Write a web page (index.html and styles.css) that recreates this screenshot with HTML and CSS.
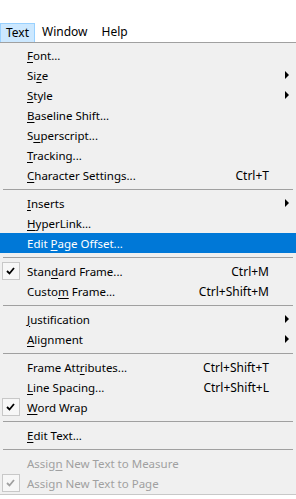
FILE: index.html
```html
<!DOCTYPE html>
<html lang="en">
<head>
    <meta charset="UTF-8">
    <meta name="viewport" content="width=device-width, initial-scale=1.0">
    <title>Text Menu</title>
    <link rel="stylesheet" href="styles.css">
</head>
<body>

    <div class="menubar">
        <span class="bar-item open">Text</span>
        <span class="bar-item">Window</span>
        <span class="bar-item">Help</span>
    </div>

    <div class="menu">
        <div class="item"><span class="check"></span><span class="label"><u>F</u>ont...</span></div>
        <div class="item"><span class="check"></span><span class="label">Si<u>z</u>e</span><span class="arrow"></span></div>
        <div class="item"><span class="check"></span><span class="label"><u>S</u>tyle</span><span class="arrow"></span></div>
        <div class="item"><span class="check"></span><span class="label"><u>B</u>aseline Shift...</span></div>
        <div class="item"><span class="check"></span><span class="label">S<u>u</u>perscript...</span></div>
        <div class="item"><span class="check"></span><span class="label"><u>T</u>racking...</span></div>
        <div class="item"><span class="check"></span><span class="label"><u>C</u>haracter Settings...</span><span class="key">Ctrl+T</span></div>
        <div class="sep"></div>
        <div class="item"><span class="check"></span><span class="label"><u>I</u>nserts</span><span class="arrow"></span></div>
        <div class="item"><span class="check"></span><span class="label"><u>H</u>yperLink...</span></div>
        <div class="item active"><span class="check"></span><span class="label">Edit <u>P</u>age Offset...</span></div>
        <div class="sep"></div>
        <div class="item"><span class="check on">
            <svg width="18" height="18" viewBox="0 0 18 18"><polyline points="5,9 7.5,11.5 12,6" fill="none" stroke="#000" stroke-width="1.8"/></svg>
        </span><span class="label">Stan<u>d</u>ard Frame...</span><span class="key">Ctrl+M</span></div>
        <div class="item"><span class="check"></span><span class="label">Custo<u>m</u> Frame...</span><span class="key">Ctrl+Shift+M</span></div>
        <div class="sep"></div>
        <div class="item"><span class="check"></span><span class="label"><u>J</u>ustification</span><span class="arrow"></span></div>
        <div class="item"><span class="check"></span><span class="label"><u>A</u>lignment</span><span class="arrow"></span></div>
        <div class="sep"></div>
        <div class="item"><span class="check"></span><span class="label">Frame Att<u>r</u>ibutes...</span><span class="key">Ctrl+Shift+T</span></div>
        <div class="item"><span class="check"></span><span class="label"><u>L</u>ine Spacing...</span><span class="key">Ctrl+Shift+L</span></div>
        <div class="item"><span class="check on">
            <svg width="18" height="18" viewBox="0 0 18 18"><polyline points="5,9 7.5,11.5 12,6" fill="none" stroke="#000" stroke-width="1.8"/></svg>
        </span><span class="label"><u>W</u>ord Wrap</span></div>
        <div class="sep"></div>
        <div class="item"><span class="check"></span><span class="label"><u>E</u>dit Text...</span></div>
        <div class="sep"></div>
        <div class="item disabled"><span class="check"></span><span class="label">Assig<u>n</u> New Text to Measure</span></div>
        <div class="item disabled"><span class="check on">
            <svg width="18" height="18" viewBox="0 0 18 18"><polyline points="5,9 7.5,11.5 12,6" fill="none" stroke="#a0a0a0" stroke-width="1.8"/></svg>
        </span><span class="label">Assign New Text to Page</span></div>
    </div>

</body>
</html>
```

FILE: styles.css
```css
body {
    font-family: "Segoe UI", "Noto Sans", sans-serif;
    font-size: 11.5px;
    background-color: #fff;
    color: #000;
    margin: 0;
    padding-top: 23px;
}

.menubar {
    display: flex;
    height: 19px;
    border-bottom: 1px solid #a0a0a0;
    font-size: 12px;
}

.bar-item {
    padding: 0 7px;
    line-height: 18px;
}

.bar-item.open {
    background-color: #cce8ff;
    border: 1px solid #99d1ff;
    border-bottom: none;
    padding: 0 5px;
}

.menu {
    background-color: #f0f0f0;
    padding: 2px 0 1px 0;
    border-bottom: 1px solid #c8c8c8;
}

.item {
    display: flex;
    align-items: center;
    height: 20px;
}

.check {
    width: 18px;
    height: 18px;
    margin: 0 7px 0 2px;
    box-sizing: border-box;
}

.check.on {
    border: 1px solid #c8c8c8;
    background-color: #f7f7f7;
}

.check svg {
    display: block;
    margin: -1px;
}

.label {
    flex: 1;
    white-space: nowrap;
}

.label u {
    text-underline-offset: 2px;
}

.key {
    margin-right: 27px;
    font-size: 12px;
}

.arrow {
    width: 0;
    height: 0;
    border-top: 4px solid transparent;
    border-bottom: 4px solid transparent;
    border-left: 4px solid #000;
    margin-right: 7px;
}

.active {
    background-color: #0078d7;
    color: #fff;
}

.disabled {
    color: #a0a0a0;
}

.sep {
    height: 8px;
    display: flex;
    align-items: center;
    padding: 0 3px;
}

.sep::after {
    content: "";
    flex: 1;
    border-top: 1px solid #a0a0a0;
}
```
